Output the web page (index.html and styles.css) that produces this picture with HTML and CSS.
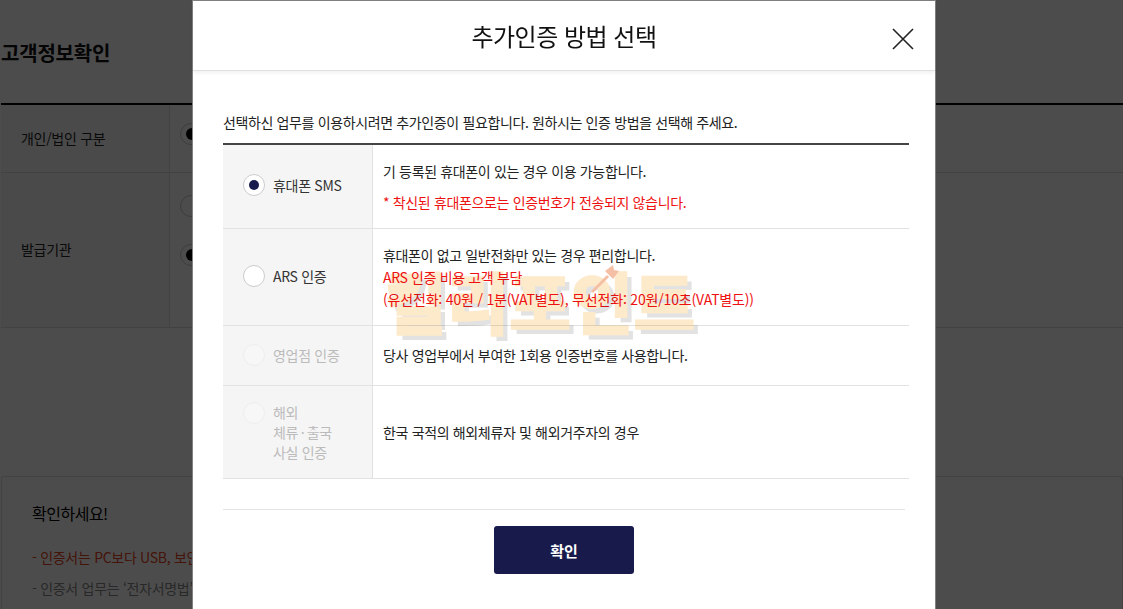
FILE: index.html
```html
<!DOCTYPE html>
<html lang="ko">

<head>
  <meta charset="UTF-8">
  <title>추가인증 방법 선택</title>
  <link rel="stylesheet" href="styles.css">
</head>

<body>
  <!-- 뒤쪽 페이지 -->
  <div class="page">
    <h1 class="page-title">고객정보확인</h1>
    <div class="form-table">
      <div class="form-row row-type">
        <div class="form-label">개인/법인 구분</div>
        <div class="form-value"><span class="bg-radio bg-radio-on"></span></div>
      </div>
      <div class="form-row row-issuer">
        <div class="form-label">발급기관</div>
        <div class="form-value issuer-radios">
          <span class="bg-radio"></span>
          <span class="bg-radio bg-radio-on"></span>
        </div>
      </div>
    </div>
    <div class="notice">
      <p class="notice-title">확인하세요!</p>
      <p class="notice-line notice-red">- 인증서는 PC보다 USB, 보안</p>
      <p class="notice-line">- 인증서 업무는 ‘전자서명법’</p>
    </div>
  </div>

  <div class="overlay"></div>

  <!-- 추가인증 팝업 -->
  <div class="modal">
    <div class="modal-head">
      <h2>추가인증 방법 선택</h2>
      <button class="close" type="button" aria-label="닫기">
        <svg width="22" height="22" viewBox="0 0 22 22">
          <path d="M1 1L21 21M21 1L1 21" stroke="#222" stroke-width="1.6" fill="none" />
        </svg>
      </button>
    </div>
    <div class="modal-body">
      <p class="lead">선택하신 업무를 이용하시려면 추가인증이 필요합니다. 원하시는 인증 방법을 선택해 주세요.</p>
      <div class="methods">
        <div class="method method-sms">
          <div class="method-name">
            <span class="radio radio-on"></span>
            <span>휴대폰 SMS</span>
          </div>
          <div class="method-desc">
            <p>기 등록된 휴대폰이 있는 경우 이용 가능합니다.</p>
            <p class="red sms-warn">* 착신된 휴대폰으로는 인증번호가 전송되지 않습니다.</p>
          </div>
        </div>
        <div class="method method-ars">
          <div class="method-name">
            <span class="radio"></span>
            <span>ARS 인증</span>
          </div>
          <div class="method-desc">
            <p>휴대폰이 없고 일반전화만 있는 경우 편리합니다.</p>
            <p class="red">ARS 인증 비용 고객 부담</p>
            <p class="red ars-fee">(유선전화: 40원 / 1분(VAT별도), 무선전화: 20원/10초(VAT별도))</p>
          </div>
        </div>
        <div class="method method-shop">
          <div class="method-name disabled">
            <span class="radio"></span>
            <span>영업점 인증</span>
          </div>
          <div class="method-desc">
            <p>당사 영업부에서 부여한 1회용 인증번호를 사용합니다.</p>
          </div>
        </div>
        <div class="method method-abroad">
          <div class="method-name disabled top">
            <span class="radio"></span>
            <span>해외<br>체류&thinsp;·&thinsp;출국<br>사실 인증</span>
          </div>
          <div class="method-desc">
            <p>한국 국적의 해외체류자 및 해외거주자의 경우</p>
          </div>
        </div>
      </div>
      <div class="actions">
        <button class="ok" type="button">확인</button>
      </div>
    </div>
    <div class="stamp">
      <span class="stamp-text">킬리포인트</span>
      <svg class="stamp-arrow" width="32" height="32" viewBox="0 0 32 32">
        <path d="M4 28L20 12" stroke="#f5bfa6" stroke-width="3" fill="none" />
        <path d="M17 7L25 1L26 6L31 7L25 15Z" fill="#f5bfa6" />
      </svg>
    </div>
  </div>
</body>

</html>
```

FILE: styles.css
```css
* {
  box-sizing: border-box;
}

html,
body {
  margin: 0;
  height: 100%;
  overflow: hidden;
}

body {
  font-family: "Noto Sans CJK KR", "Noto Sans", sans-serif;
  font-size: 14px;
  letter-spacing: -0.3px;
  color: #222;
  background-color: #fff;
}

p {
  margin: 0;
}

/* 뒤쪽 페이지 */
.page {
  padding-left: 1px;
}

.page-title {
  margin: 0;
  height: 103px;
  padding-top: 38px;
  font-size: 20px;
  line-height: 30px;
  font-weight: 700;
  letter-spacing: -0.2px;
  color: #111;
}

.form-table {
  border-top: 2px solid #000;
  border-bottom: 1px solid #ddd;
}

.form-row {
  display: flex;
  border-bottom: 1px solid #ddd;
}

.form-row:last-child {
  border-bottom: 0;
}

.row-type {
  height: 68px;
}

.row-issuer {
  height: 154px;
}

.form-label {
  width: 169px;
  padding: 0 0 2px 20px;
  display: flex;
  align-items: center;
  background-color: #f8f8f8;
  border-right: 1px solid #ddd;
}

.form-value {
  padding: 18px 0 0 10px;
}

.issuer-radios {
  padding-top: 22px;
  display: flex;
  flex-direction: column;
  gap: 27px;
}

.bg-radio {
  display: block;
  width: 22px;
  height: 22px;
  border: 1px solid #ccc;
  border-radius: 50%;
  background-color: #fff;
  position: relative;
}

.bg-radio-on::after {
  content: "";
  position: absolute;
  left: 5px;
  top: 4px;
  width: 12px;
  height: 12px;
  border-radius: 50%;
  background-color: #000;
}

.notice {
  margin-top: 148px;
  height: 133px;
  padding: 24px 30px 0;
  border: 1px solid #ddd;
  border-bottom: 0;
  border-radius: 3px 3px 0 0;
}

.notice-title {
  font-size: 16px;
  line-height: 24px;
  letter-spacing: -0.5px;
  color: #000;
  margin-bottom: 21px;
}

.notice-line {
  line-height: 22px;
  margin-bottom: 9px;
  white-space: nowrap;
  color: #888;
}

.notice-red {
  color: #e8441e;
}

.overlay {
  position: fixed;
  inset: 0;
  background-color: rgba(0, 0, 0, 0.7);
}

/* 팝업 */
.modal {
  position: fixed;
  left: 192px;
  top: 0;
  bottom: 0;
  width: 744px;
  background-color: #fff;
  border: 1px solid #808080;
  border-bottom: 0;
}

.modal-head {
  height: 70px;
  position: relative;
  display: flex;
  align-items: center;
  justify-content: center;
  border-bottom: 1px solid #e0e0e0;
  box-shadow: 0 2px 4px rgba(0, 0, 0, 0.06);
}

.modal-head h2 {
  margin: 0;
  font-size: 24px;
  font-weight: 400;
  letter-spacing: -0.5px;
  color: #111;
  line-height: 34px;
}

.close {
  position: absolute;
  right: 21px;
  top: 27px;
  width: 22px;
  height: 22px;
  padding: 0;
  border: 0;
  background: none;
  cursor: pointer;
}

.close svg {
  display: block;
}

.modal-body {
  padding: 40px 26px 0 30px;
}

.lead {
  line-height: 22px;
  color: #222;
  letter-spacing: -0.37px;
}

.methods {
  margin-top: 10px;
  border-top: 2px solid #444;
}

.method {
  display: flex;
  border-bottom: 1px solid #e2e2e2;
}

.method-sms {
  height: 84px;
}

.method-ars {
  height: 97px;
}

.method-shop {
  height: 60px;
}

.method-abroad {
  height: 93px;
}

.method-name {
  width: 150px;
  padding: 0 0 2px 20px;
  display: flex;
  align-items: center;
  gap: 8px;
  flex-shrink: 0;
  background-color: #f5f5f5;
  border-right: 1px solid #e2e2e2;
  color: #333;
  line-height: 20px;
}

.method-sms .method-name {
  padding-bottom: 4px;
}

.method-name.top {
  align-items: flex-start;
  padding: 16px 0 0 20px;
}

.method-name.disabled {
  color: #bbb;
}

.method-desc {
  flex: 1;
  padding-left: 10px;
  display: flex;
  flex-direction: column;
  justify-content: center;
  line-height: 22px;
  letter-spacing: -0.35px;
  color: #222;
}

.method-shop .method-desc {
  padding-bottom: 2px;
}

.red {
  color: #ee1111;
}

.sms-warn {
  margin-top: 9px;
}

.ars-fee {
  letter-spacing: -0.18px;
}

.radio {
  width: 22px;
  height: 22px;
  flex-shrink: 0;
  border: 1px solid #ccc;
  border-radius: 50%;
  background-color: #fff;
  position: relative;
}

.disabled .radio {
  border-color: #eee;
  background-color: #f7f7f7;
}

.radio-on::after {
  content: "";
  position: absolute;
  left: 5px;
  top: 5px;
  width: 10px;
  height: 10px;
  border-radius: 50%;
  background-color: #181a4c;
}

.actions {
  margin-top: 30px;
  margin-right: 4px;
  border-top: 1px solid #e5e5e5;
  padding-top: 16px;
  display: flex;
  justify-content: center;
}

.ok {
  width: 140px;
  height: 48px;
  border: 0;
  border-radius: 3px;
  background-color: #181a4c;
  color: #fff;
  font-family: inherit;
  font-size: 15px;
  font-weight: 700;
  cursor: pointer;
}

/* 워터마크 */
.stamp {
  position: absolute;
  left: 192px;
  top: 259px;
  mix-blend-mode: multiply;
  pointer-events: none;
}

.stamp-text {
  display: block;
  font-size: 67px;
  line-height: 80px;
  font-weight: 900;
  letter-spacing: 0.5px;
  color: #fdeacb;
  -webkit-text-stroke: 1.5px #fdeacb;
  text-shadow: 5px 5px 0 #e2e2e2;
  white-space: nowrap;
}

.stamp-arrow {
  position: absolute;
  left: 203px;
  top: 4px;
}
```
